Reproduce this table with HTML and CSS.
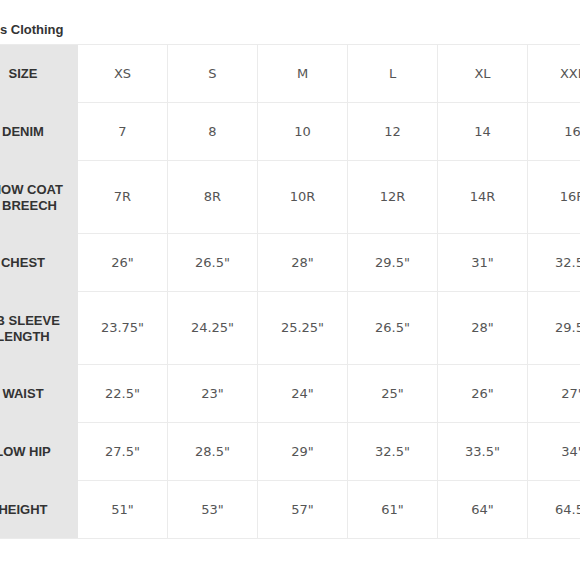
FILE: index.html
```html
<!DOCTYPE html>
<html>
<head>
<meta charset="utf-8">
<link rel="stylesheet" href="styles.css">
</head>
<body>
<div class="page">
  <h2 class="title">Kids Clothing</h2>
  <table class="chart">
    <colgroup>
      <col class="c-label">
      <col class="c-size"><col class="c-size"><col class="c-size">
      <col class="c-size"><col class="c-size"><col class="c-size">
    </colgroup>
    <tr class="single">
      <th>SIZE</th><td>XS</td><td>S</td><td>M</td><td>L</td><td>XL</td><td>XXL</td>
    </tr>
    <tr class="single">
      <th>DENIM</th><td>7</td><td>8</td><td>10</td><td>12</td><td>14</td><td>16</td>
    </tr>
    <tr class="double">
      <th>SHOW COAT<br>&amp; BREECH</th><td>7R</td><td>8R</td><td>10R</td><td>12R</td><td>14R</td><td>16R</td>
    </tr>
    <tr class="single">
      <th>CHEST</th><td>26"</td><td>26.5"</td><td>28"</td><td>29.5"</td><td>31"</td><td>32.5"</td>
    </tr>
    <tr class="double">
      <th>CB SLEEVE<br>LENGTH</th><td>23.75"</td><td>24.25"</td><td>25.25"</td><td>26.5"</td><td>28"</td><td>29.5"</td>
    </tr>
    <tr class="single">
      <th>WAIST</th><td>22.5"</td><td>23"</td><td>24"</td><td>25"</td><td>26"</td><td>27"</td>
    </tr>
    <tr class="single">
      <th>LOW HIP</th><td>27.5"</td><td>28.5"</td><td>29"</td><td>32.5"</td><td>33.5"</td><td>34"</td>
    </tr>
    <tr class="single last">
      <th>HEIGHT</th><td>51"</td><td>53"</td><td>57"</td><td>61"</td><td>64"</td><td>64.5"</td>
    </tr>
  </table>
</div>
</body>
</html>
```
FILE: styles.css
```css
html, body {
  margin: 0;
  padding: 0;
  background: #ffffff;
  overflow: hidden;
}

.page {
  width: 580px;
  height: 580px;
  overflow: hidden;
}

.title {
  margin: 0 0 6px -21px;
  padding-top: 22px;
  font-family: "Liberation Sans", Arial, sans-serif;
  font-size: 13px;
  line-height: 16px;
  font-weight: bold;
  color: #333333;
  white-space: nowrap;
}

.chart {
  width: 650px;
  min-width: 650px;
  margin-left: -32px;
  border-collapse: separate;
  border-spacing: 0;
  border-top: 1px solid #ebebeb;
  table-layout: fixed;
}

.c-label {
  width: 110px;
}

.c-size {
  width: 90px;
}

.chart th {
  padding: 0;
  background: #e6e6e6;
  font-family: "Liberation Sans", Arial, sans-serif;
  font-size: 13px;
  line-height: 16px;
  font-weight: bold;
  color: #333333;
  text-align: center;
  vertical-align: middle;
  white-space: nowrap;
}

.chart td {
  padding: 0;
  border-right: 1px solid #ebebeb;
  border-bottom: 1px solid #ebebeb;
  font-family: "DejaVu Sans", sans-serif;
  font-size: 13px;
  line-height: 16px;
  color: #555555;
  text-align: center;
  vertical-align: middle;
  white-space: nowrap;
}

.single td {
  height: 57px;
}

.double td {
  height: 72px;
}

.last th {
  border-bottom: 1px solid #ebebeb;
}
```
